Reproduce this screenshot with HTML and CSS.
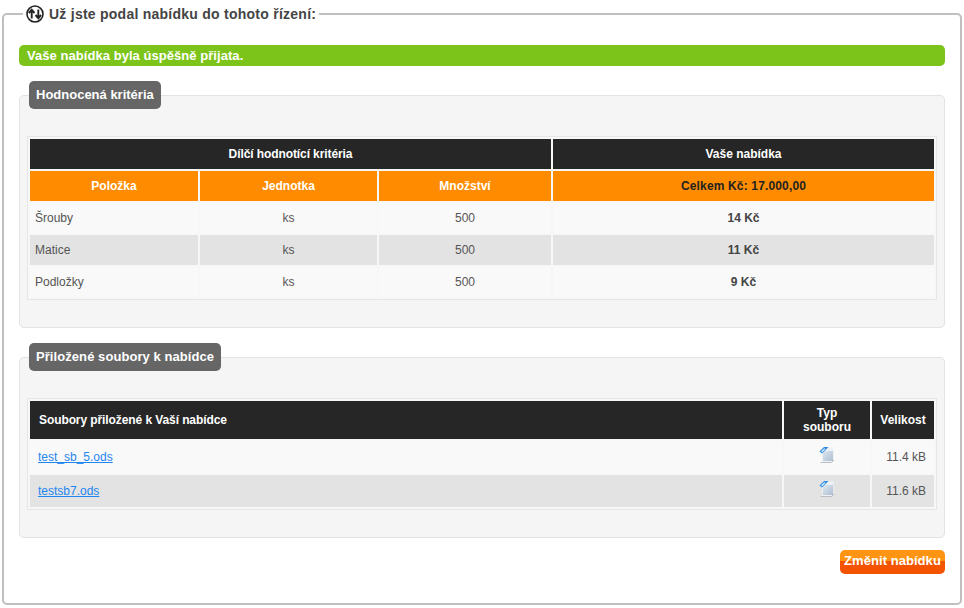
FILE: index.html
```html
<!DOCTYPE html>
<html lang="cs">
<head>
<meta charset="utf-8">
<title>Nabídka</title>
<link rel="stylesheet" href="styles.css">
</head>
<body>
<fieldset class="outer">
  <legend class="outer-legend">
    <svg class="swap-icon" width="18" height="18" viewBox="0 0 18 18" aria-hidden="true">
      <circle cx="9" cy="9" r="8" fill="#fff" stroke="#222" stroke-width="1.6"/>
      <path d="M5.7 13.5V5.2M2.9 8L5.7 4.8L8.5 8M12.3 4.5V12.8M9.5 10L12.3 13.2L15.1 10" fill="none" stroke="#222" stroke-width="1.9"/>
    </svg>
    <span>Už jste podal nabídku do tohoto řízení:</span>
  </legend>
  <div class="notice">Vaše nabídka byla úspěšně přijata.</div>

  <fieldset class="panel panel-criteria">
    <legend class="panel-legend">Hodnocená kritéria</legend>
    <table class="grid">
      <colgroup><col class="c1"><col class="c2"><col class="c3"><col class="c4"></colgroup>
      <tr class="head-dark"><th class="tight" colspan="3">Dílčí hodnotící kritéria</th><th>Vaše nabídka</th></tr>
      <tr class="head-orange"><th>Položka</th><th>Jednotka</th><th>Množství</th><th class="total">Celkem Kč: 17.000,00</th></tr>
      <tr class="row"><td>Šrouby</td><td class="center">ks</td><td class="center">500</td><td class="center strong">14 Kč</td></tr>
      <tr class="row alt"><td>Matice</td><td class="center">ks</td><td class="center">500</td><td class="center strong">11 Kč</td></tr>
      <tr class="row"><td>Podložky</td><td class="center">ks</td><td class="center">500</td><td class="center strong">9 Kč</td></tr>
    </table>
  </fieldset>

  <fieldset class="panel panel-files">
    <legend class="panel-legend">Přiložené soubory k nabídce</legend>
    <table class="grid">
      <colgroup><col class="f1"><col class="f2"><col class="f3"></colgroup>
      <tr class="head-files"><th class="left tight">Soubory přiložené k Vaší nabídce</th><th>Typ<br>souboru</th><th>Velikost</th></tr>
      <tr class="row file-row"><td class="file"><a href="#">test_sb_5.ods</a></td><td class="center icon-cell"><svg class="file-icon" width="16" height="17" viewBox="0 0 16 17" aria-hidden="true"><use href="#doc"/></svg></td><td class="size">11.4 kB</td></tr>
      <tr class="row alt file-row"><td class="file"><a href="#">testsb7.ods</a></td><td class="center icon-cell"><svg class="file-icon" width="16" height="17" viewBox="0 0 16 17" aria-hidden="true"><use href="#doc"/></svg></td><td class="size">11.6 kB</td></tr>
    </table>
  </fieldset>

  <div class="actions"><button class="btn" type="button">Změnit nabídku</button></div>
</fieldset>
<svg class="defs" width="0" height="0" aria-hidden="true">
  <defs>
    <linearGradient id="page" x1="0" y1="0" x2="1" y2="1"><stop offset="0" stop-color="#dce6f0"/><stop offset="1" stop-color="#aebfd2"/></linearGradient>
    <g id="doc">
      <path d="M3 1.5H14.5V14L12.5 16H3Z" fill="#eef1f4"/>
      <path d="M1.5 16.5H12.5L15 14" fill="none" stroke="#b9bec4" stroke-width="1"/>
      <rect x="4" y="5" width="10" height="10" fill="url(#page)"/>
      <path d="M0.5 5.5L5 1H9.5L3 7.5Z" fill="#2d8de4"/>
      <path d="M2.2 5.4L5.4 2.2L6.2 2.9L3 6.2Z" fill="#fff"/>
    </g>
  </defs>
</svg>
</body>
</html>
```

FILE: styles.css
```css
* { box-sizing: border-box; }
html, body { margin: 0; padding: 0; background: #fff; }
body { font-family: "Liberation Sans", Arial, sans-serif; font-size: 12px; color: #444; }

.outer {
  width: 960px;
  height: 599px;
  margin: 6px 0 0 2px;
  padding: 0 15px 0 15px;
  border: 2px solid #bfbfbf;
  border-radius: 5px;
  min-width: 0;
}
.outer-legend {
  margin-left: 4px;
  padding: 0 3px;
  height: 16px;
  display: flex;
  align-items: center;
  gap: 5px;
  font-size: 14px;
  font-weight: bold;
  color: #444;
  line-height: 16px;
  letter-spacing: 0.25px;
}
.swap-icon { flex: none; }

.notice {
  margin-top: 23px;
  height: 21px;
  padding: 0 8px;
  background: #7dc41a;
  border-radius: 5px;
  color: #fff;
  font-size: 13px;
  font-weight: bold;
  line-height: 21px;
  letter-spacing: 0.05px;
}

.panel {
  margin: 15px 0 0;
  padding: 0 7px 0 7px;
  background: #f5f5f5;
  border: 1px solid #e3e3e3;
  border-radius: 5px;
  min-width: 0;
}
.panel-criteria { height: 247px; }
.panel-files { height: 195px; }
.panel-legend {
  margin-left: 2px;
  padding: 0 7px;
  height: 28px;
  background: #666;
  border-radius: 5px;
  color: #fff;
  font-size: 13px;
  font-weight: bold;
  line-height: 27px;
}
.panel-files .panel-legend { letter-spacing: 0.07px; }

.grid {
  width: 910px;
  table-layout: fixed;
  border-collapse: separate;
  border-spacing: 2px;
  border: 1px solid #e6e6e6;
  background: #f7f7f7;
}
.panel-criteria .grid { margin-top: 27px; }
.panel-files .grid { margin-top: 27px; }

.c1 { width: 168px; }
.c2 { width: 177px; }
.c3 { width: 172px; }
.c4 { width: 381px; }
.f1 { width: 752px; }
.f2 { width: 86px; }
.f3 { width: 62px; }

th { padding: 0; font-size: 12px; font-weight: bold; color: #fff; text-align: center; }
.tight { letter-spacing: -0.09px; }
.head-dark th { height: 30px; background: #262626; }
.head-orange th { height: 30px; background: #ff8c00; }
.head-orange .total { color: #222; letter-spacing: 0.15px; }
.head-files th { height: 38px; background: #262626; line-height: 14px; }
.head-files .left { text-align: left; padding-left: 9px; }

td { height: 30px; padding: 0; color: #555; font-size: 12px; background: #f9f9f9; }
.file-row td { height: 32px; }
.alt td { background: #e3e3e3; }
td:first-child { padding-left: 5px; }
.center { text-align: center; }
.strong { font-weight: bold; color: #444; }
td.file { padding-left: 8px; }
.file a { color: #1e86f0; text-decoration: underline; }
.size { text-align: right; padding-right: 8px; font-size: 12px; }
.icon-cell { vertical-align: top; padding-top: 5px; }
.file-icon { display: block; margin: 0 auto; }

.actions { display: flex; justify-content: flex-end; margin-top: 12px; }
.btn {
  width: 105px;
  height: 24px;
  padding: 0 0 3px;
  border: 0;
  border-radius: 5px;
  background: linear-gradient(#ff9412 0, #ff9412 45%, #f45400 45%, #f45400 100%);
  color: #fff;
  font-family: inherit;
  font-size: 13px;
  font-weight: bold;
  letter-spacing: 0.05px;
  cursor: pointer;
}
.defs { position: absolute; }
```
